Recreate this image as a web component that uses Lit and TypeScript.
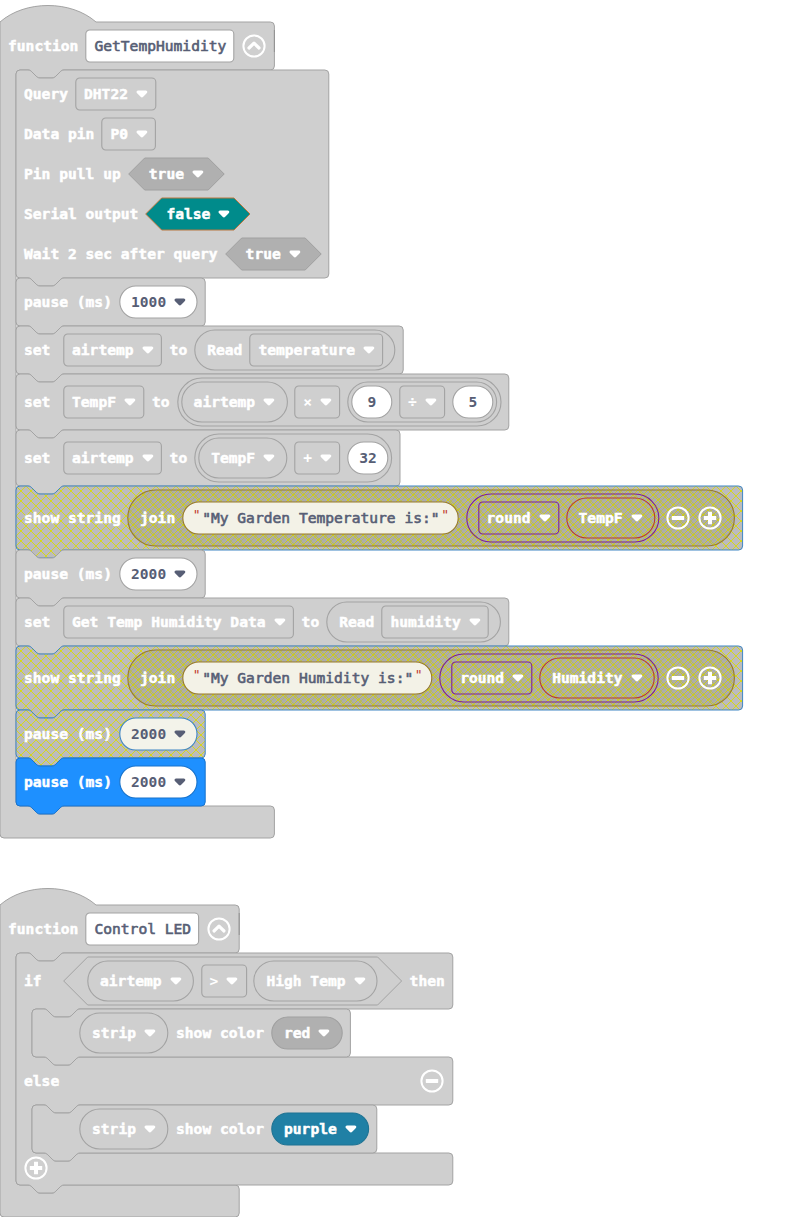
import { LitElement, html, svg, css, nothing } from "lit";
import { customElement, property } from "lit/decorators.js";
import { styleMap } from "lit/directives/style-map.js";
import { classMap } from "lit/directives/class-map.js";

const CH = 8.8;

type Node = {
  k: "label" | "field" | "pill" | "hex" | "num" | "name" | "str" | "group" | "hexgroup" | "icon" | "space";
  t?: string;
  h?: number;
  arrow?: boolean;
  fill?: string;
  stroke?: string;
  padL?: number;
  padR?: number;
  kids?: Node[];
  hatch?: boolean;
};

const GREY = "#cfcfcf";
const LINE = "#a3a3a3";

const label = (t: string): Node => ({ k: "label", t });
const field = (t: string, stroke = LINE): Node => ({ k: "field", t, arrow: true, stroke });
const variable = (t: string, stroke = LINE, hatch = false): Node => ({ k: "pill", t, h: 40, arrow: true, stroke, hatch });
const color = (t: string, fill: string, stroke: string): Node => ({ k: "pill", t, h: 32, arrow: true, fill, stroke });
const hex = (t: string, fill = "#b0b0b0", stroke = "#a0a0a0"): Node => ({ k: "hex", t, arrow: true, fill, stroke });
const num = (t: string, arrow = false, stroke = LINE, fill = "#fff"): Node => ({ k: "num", t, arrow, fill, stroke });
const group = (h: number, padL: number, padR: number, kids: Node[], stroke = LINE, hatch = false): Node =>
  ({ k: "group", h, padL, padR, kids, stroke, hatch });
const icon = (t: string): Node => ({ k: "icon", t });

// Short labels keep a minimum slot of 32px at the head of a block.
const labelWidths: Record<string, number> = { set: 32, if: 32, "show string": 96 };

function width(n: Node): number {
  const t = (n.t ?? "").length * CH + (n.arrow ? 20 : 0);
  switch (n.k) {
    case "label": return labelWidths[n.t!] ?? t;
    case "field": case "name": return t + 16;
    case "pill": return t + 24;
    case "hex": return t + 40;
    case "num": return n.arrow ? t + 22 : 40;
    case "str": return t + 37.8;
    case "icon": return 24;
    case "space": return 32;
    default: return n.padL! + n.padR! + row(n.kids!);
  }
}
const row = (kids: Node[]) => kids.reduce((s, k) => s + width(k), 0) + 8 * (kids.length - 1);

const notch = "c2,0 3,1 4,2 l4,4 c1,1 2,2 4,2 h12 c2,0 3,-1 4,-2 l4,-4 c1,-1 2,-2 4,-2";
const notchBack = "c-2,0 -3,1 -4,2 l-4,4 c-1,1 -2,2 -4,2 h-12 c-2,0 -3,-1 -4,-2 l-4,-4 c-1,-1 -2,-2 -4,-2";

const stackPath = (w: number, h: number) =>
  `M0,4 a4,4 0 0 1 4,-4 H12 ${notch} H${w - 4} a4,4 0 0 1 4,4 V${h - 4} a4,4 0 0 1 -4,4 H48 ${notchBack} H4 a4,4 0 0 1 -4,-4 Z`;

const cavity = (w: number, top: number, inner: number) =>
  `V${top - 4} a4,4 0 0 1 -4,4 H64 ${notchBack} H20 a4,4 0 0 0 -4,4 V${top + inner - 4} a4,4 0 0 0 4,4 H28 ${notch} H${w - 4} a4,4 0 0 1 4,4`;

const functionPath = (w: number, inner: number) =>
  `M0,0 C25,-22 71,-22 96,0 H${w - 4} a4,4 0 0 1 4,4 ${cavity(w, 48, inner)} V${76 + inner} a4,4 0 0 1 -4,4 H4 a4,4 0 0 1 -4,-4 Z`;

const hexPath = (w: number, h: number, p: number) =>
  `M${p - 0.3},0 H${w - p} L${w},${h / 2} L${w - p},${h} H${p - 0.3} L-0.3,${h / 2} Z`;

const hatchDefs = svg`<defs>
  <pattern id="hatch" patternUnits="userSpaceOnUse" width="10" height="10">
    <rect width="10" height="10" fill="#bcbcbc"/>
    <path d="M-1,-1 L11,11" stroke="#d6d61c" stroke-width="1"/>
    <path d="M11,-1 L-1,11" stroke="#d6d61c" stroke-width="1"/>
  </pattern>
  <pattern id="veil" patternUnits="userSpaceOnUse" width="10" height="10">
    <rect width="10" height="10" fill="#9c9c9c" fill-opacity=".5"/>
    <path d="M-1,-1 L11,11" stroke="#cccc1c" stroke-width="1"/>
    <path d="M11,-1 L-1,11" stroke="#cccc1c" stroke-width="1"/>
  </pattern>
</defs>`;

const arrow = html`<svg class="arrow" width="12" height="8" viewBox="0 0 12 8">
  <path d="M0.5,2.1 Q0.4,0.5 2,0.5 H9.8 Q11.4,0.5 11.3,2.1 Q11.2,2.5 10.9,2.9 L7.2,6.8 Q5.9,8 4.6,6.8 L0.9,2.9 Q0.6,2.5 0.5,2.1 Z" fill="currentColor"/>
</svg>`;

const glyphs: Record<string, unknown> = {
  up: svg`<path d="M7,14 L12,9.2 L17,14" fill="none" stroke="#fff" stroke-width="3.2" stroke-linecap="round" stroke-linejoin="round"/>`,
  minus: svg`<rect x="5.8" y="9.9" width="12.4" height="4" rx="0.6" fill="#fff"/>`,
  plus: svg`<path d="M12,5.8 V18.2 M5.8,12 H18.2" stroke="#fff" stroke-width="4"/>`,
};

function draw(n: Node): unknown {
  const w = width(n);
  if (n.k === "label") return html`<span class="label" style=${styleMap({ width: w + "px" })}>${n.t}</span>`;
  if (n.k === "space") return html`<span class="space"></span>`;
  if (n.k === "icon")
    return html`<svg class="icon" width="24" height="24"><circle cx="12" cy="12" r="10.6" fill="none" stroke="#fff" stroke-width="2"/>${glyphs[n.t!]}</svg>`;

  const h = n.h ?? 32;
  const fill = n.fill ?? (n.hatch ? "url(#veil)" : "none");
  const rx = n.k === "field" || n.k === "name" ? 4 : h / 2;
  const outline = n.k === "hex" || n.k === "hexgroup"
    ? svg`<path d=${hexPath(w, h, h / 2)} fill=${fill} stroke=${n.stroke}/>`
    : svg`<rect x="-0.2" y="0" width=${w} height=${h} rx=${rx} fill=${fill} stroke=${n.stroke} stroke-width="1.1"/>`;
  const padding = n.kids ? `0 ${n.padR}px 0 ${n.padL}px` : "0";
  const operator = n.k === "field" && n.t!.length === 1;
  return html`<span class=${classMap({ shape: true, operator, ["is-" + n.k]: true })}>
    <svg class="back" width=${w} height=${h}>${n.hatch ? hatchDefs : nothing}${outline}</svg>
    <span class="inside" style=${styleMap({ padding })}>
      ${n.kids
        ? n.kids.map(draw)
        : n.k === "str"
          ? html`<span class="quote">"</span><span>${n.t}</span><span class="quote">"</span>`
          : html`<span>${n.t}</span>${n.arrow ? arrow : nothing}`}
    </span>
  </span>`;
}

type Block = { h: number; rows: Node[][]; fill?: string; stroke?: string };

function drawBlock(b: Block) {
  const w = 16 + Math.max(...b.rows.map(row));
  return html`<div class="block">
    <svg class="back" width=${w} height=${b.h}>${b.fill === "url(#hatch)" ? hatchDefs : nothing}
      <path d=${stackPath(w, b.h)} fill=${b.fill ?? GREY} stroke=${b.stroke ?? LINE}/>
    </svg>
    <div class="rows">${b.rows.map((r) => html`<div class="row">${r.map(draw)}</div>`)}</div>
  </div>`;
}

const pause = (ms: string, fill?: string, stroke?: string, inner?: string): Block =>
  ({ h: 48, rows: [[label("pause (ms)"), num(ms, true, stroke, inner)]], fill, stroke });

const BROWN = "#977a2c";
const PURPLE = "#7d2196";
const RED = "#b63a35";

const showString = (text: string, name: string): Block => ({
  h: 64, fill: "url(#hatch)", stroke: "#3f86c4",
  rows: [[
    label("show string"),
    group(56, 12, 12, [
      label("join"),
      { k: "str", t: text, fill: "#f3f2e7", stroke: BROWN },
      group(48, 12, 4, [field("round", PURPLE), variable(name, RED)], PURPLE),
      icon("minus"), icon("plus"),
    ], BROWN, true),
  ]],
});

const humidityBlocks: Block[] = [
  { h: 208, rows: [
    [label("Query"), field("DHT22")],
    [label("Data pin"), field("P0")],
    [label("Pin pull up"), hex("true")],
    [label("Serial output"), hex("false", "#008b8b", "#b8763e")],
    [label("Wait 2 sec after query"), hex("true")],
  ] },
  pause("1000"),
  { h: 48, rows: [[label("set"), field("airtemp"), label("to"), group(40, 12, 12, [label("Read"), field("temperature")])]] },
  { h: 56, rows: [[label("set"), field("TempF"), label("to"),
    group(48, 4, 4, [variable("airtemp"), field("×"), group(40, 4, 4, [num("9"), field("÷"), num("5")])])]] },
  { h: 56, rows: [[label("set"), field("airtemp"), label("to"), group(48, 4, 4, [variable("TempF"), field("+"), num("32")])]] },
  showString('"My Garden Temperature is:"', "TempF"),
  pause("2000"),
  { h: 48, rows: [[label("set"), field("Get Temp Humidity Data"), label("to"), group(40, 12, 12, [label("Read"), field("humidity")])]] },
  showString('"My Garden Humidity is:"', "Humidity"),
  pause("2000", "url(#hatch)", "#3f86c4", "#f3f3ea"),
  pause("2000", "#1e90ff", "#1873cc"),
];

const strip = (c: Node): Block => ({ h: 48, rows: [[{ k: "space" }, variable("strip"), label("show color"), c]] });

const condition: Node = {
  k: "hexgroup", h: 48, padL: 24, padR: 24, stroke: LINE,
  kids: [variable("airtemp"), field(">"), variable("High Temp")],
};

function drawIf() {
  const head = [label("if"), condition, label("then")];
  const w = 16 + row(head);
  const d = `M0,4 a4,4 0 0 1 4,-4 H12 ${notch} H${w - 4} a4,4 0 0 1 4,4 ${cavity(w, 56, 48)} ${cavity(w, 152, 48)} V228 a4,4 0 0 1 -4,4 H48 ${notchBack} H4 a4,4 0 0 1 -4,-4 Z`;
  return html`<div class="block">
    <svg class="back" width=${w} height="232"><path d=${d} fill=${GREY} stroke=${LINE}/></svg>
    <div class="branches">
      <div class="row if-head">${head.map(draw)}</div>
      <div class="nested">${drawBlock(strip(color("red", "#b0b0b0", "#a0a0a0")))}</div>
      <div class="row else-head" style=${styleMap({ width: w - 16 + "px" })}>${draw(label("else"))}${draw(icon("minus"))}</div>
      <div class="nested">${drawBlock(strip(color("purple", "#2080a5", "#1f7393")))}</div>
      <div class="row tail">${draw(icon("plus"))}</div>
    </div>
  </div>`;
}

@customElement("block-function")
export class BlockFunction extends LitElement {
  @property() name = "";
  @property({ type: Number }) inner = 0;
  @property({ attribute: false }) content: unknown;

  static styles = css`
    :host { display: block; }
    .function, .block, .shape { display: grid; justify-items: start; }
    .function > *, .block > *, .shape > * { grid-area: 1 / 1; }
    .shape { align-items: center; flex: none; }
    svg { display: block; overflow: visible; flex: none; }
    .column { display: flex; flex-direction: column; }
    .row { display: flex; align-items: center; gap: 8px; height: 40px; padding: 0 8px; -webkit-text-stroke: 0.5px; }
    .rows { display: flex; flex-direction: column; justify-content: center; width: max-content; }
    .header { height: 48px; }
    .stack, .nested { padding-left: 16px; }
    .branches { display: flex; flex-direction: column; }
    .if-head { height: 56px; }
    .else-head { height: 48px; justify-content: space-between; }
    .tail { height: 30px; }
    .is-group .icon, .else-head .icon { margin: 0 0.7px 0 -0.7px; }
    .label { white-space: pre; flex: none; }
    .space { width: 32px; }
    .inside { display: flex; align-items: center; gap: 8px; justify-self: stretch; justify-content: center; white-space: pre; box-sizing: border-box; }
    .is-group > .inside, .is-hexgroup > .inside { justify-content: flex-start; }
    .is-name, .is-num, .is-str { color: #575e75; }
    .is-num, .operator { -webkit-text-stroke: 0; }
    .is-str > .inside { gap: 1.5px; }
    .is-name, .is-str { -webkit-text-stroke: 0.6px; font-weight: 400; }
    .quote { color: #c0392b; font-size: 13px; -webkit-text-stroke: 0; padding-bottom: 6px; }
  `;

  render() {
    const title: Node = { k: "name", t: this.name, fill: "#fff", stroke: LINE };
    const head = [label("function"), title, icon("up")];
    const w = 16 + row(head);
    return html`<div class="function">
      <svg class="back" width=${w} height=${this.inner + 80}>
        <path d=${functionPath(w, this.inner)} fill=${GREY} stroke=${LINE}/>
        <path d="M${w},8 V30" stroke="#929292"/>
      </svg>
      <div class="column">
        <div class="row header">${head.map(draw)}</div>
        <div class="stack">${this.content}</div>
      </div>
    </div>`;
  }
}

@customElement("app-root")
export class AppRoot extends LitElement {
  static styles = css`
    :host {
      display: flex; flex-direction: column; gap: 67px; box-sizing: border-box;
      width: 794px; height: 1217px; padding-top: 22px; overflow: hidden; background: #fff;
      color: #fff; font: 700 14.6px/20px "DejaVu Sans Mono", monospace; letter-spacing: 0.01px;
    }
  `;

  render() {
    return html`
      <block-function name="GetTempHumidity" .inner=${736} .content=${humidityBlocks.map(drawBlock)}></block-function>
      <block-function name="Control LED" .inner=${232} .content=${drawIf()}></block-function>
    `;
  }
}
